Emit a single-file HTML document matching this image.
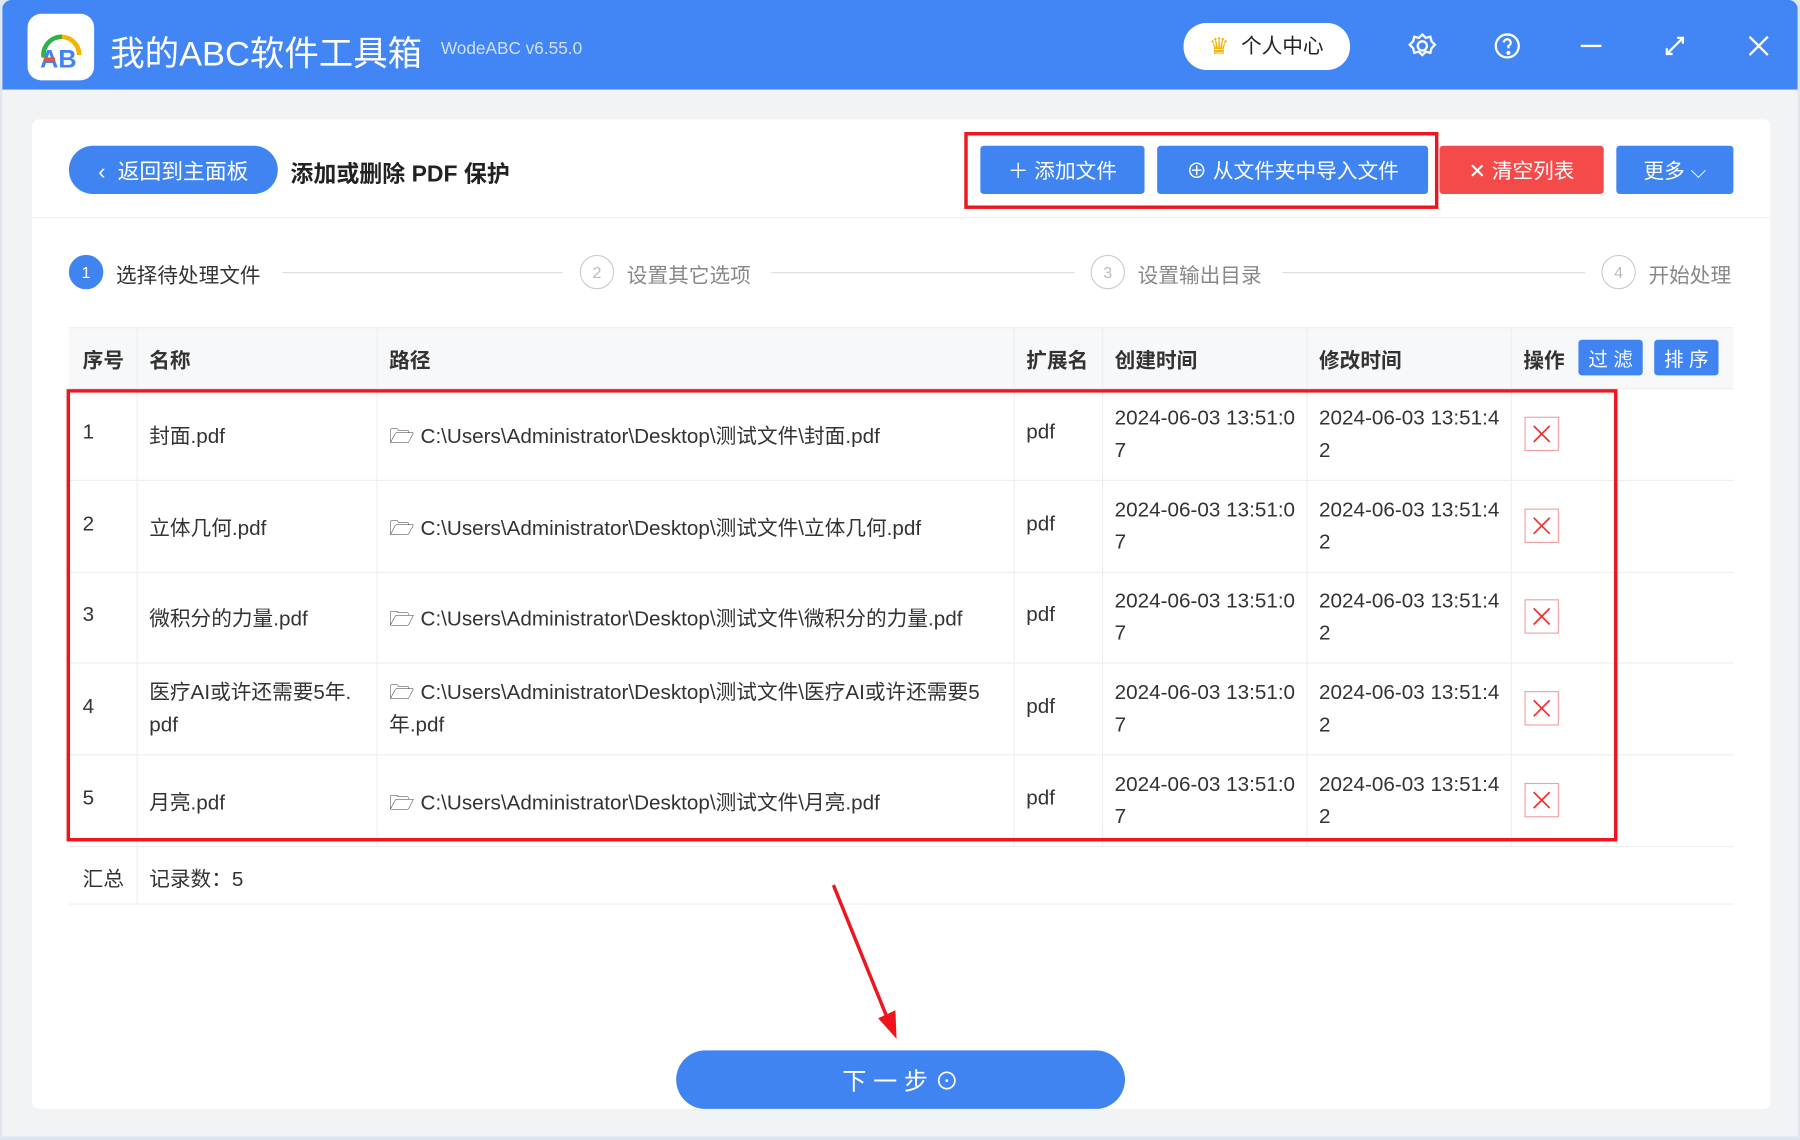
<!DOCTYPE html>
<html><head><meta charset="utf-8"><style>
*{margin:0;padding:0;box-sizing:border-box}
html,body{width:1800px;height:1140px;overflow:hidden;background:#dfe6ee}
#s{position:absolute;left:0;top:0;width:1568px;height:993px;transform:scale(1.14796);transform-origin:0 0;font-family:"Liberation Sans","Noto Sans CJK SC",sans-serif;color:#333}
.a{position:absolute}
.btn{position:absolute;color:#fff;font-size:18px;display:flex;align-items:center;justify-content:center;border-radius:3px;background:#3f84f1}
.c{position:absolute;font-size:18px;color:#333}
.st{position:absolute;top:222px;width:30px;height:30px;border-radius:50%;border:1px solid #ccc;color:#bbb;font-size:14px;text-align:center;line-height:28px}
.stl{position:absolute;top:226px;font-size:18px;color:#888}
.ln{position:absolute;top:237px;height:1px;background:#ddd}
.x{position:absolute;left:1328px;width:30px;height:30px;border:1px solid #f3a0a0}
</style></head><body><div id="s">
<div class="a" style="left:2px;top:0;width:1564px;height:990px;background:#f2f3f5;border-radius:8px 8px 0 0;overflow:hidden">
<div class="a" style="left:0;top:0;width:1564px;height:78px;background:#4285f4"></div>
</div>
<div class="a" style="left:24px;top:12px;width:58px;height:58px;background:#fff;border-radius:12px"></div>
<svg class="a" style="left:24px;top:12px" width="58" height="58"><path d="M14 38 A16 16 0 0 1 30 20" stroke="#2db24a" stroke-width="4" fill="none"/><path d="M30 20 A16 16 0 0 1 45 36" stroke="#f5b400" stroke-width="4" fill="none"/><text x="11" y="47" font-size="22" font-weight="bold" fill="#3f84f1" font-family="Liberation Sans">AB</text><rect x="14" y="38" width="10" height="3" fill="#e53"/></svg>
<div class="a" style="left:96px;top:22px;font-size:30px;color:#fff">我的ABC软件工具箱</div>
<div class="a" style="left:384px;top:34px;font-size:15px;color:#cfe0ff">WodeABC v6.55.0</div>
<div class="a" style="left:1031px;top:20px;width:145px;height:41px;background:#fff;border-radius:20px;font-size:18px;line-height:41px;padding-left:50px;color:#222">个人中心</div>
<div class="a" style="left:1053px;top:28px;font-size:20px;color:#f5b400">♛</div>
<svg class="a" style="left:1225px;top:26px" width="30" height="30" fill="none" stroke="#fff" stroke-width="2"><circle cx="14" cy="14" r="4"/><path d="M14 4l3 3 4-1 1 4 3 3-3 3-1 4-4-1-3 3-3-3-4 1-1-4-3-3 3-3 1-4 4 1z"/></svg>
<svg class="a" style="left:1299px;top:26px" width="30" height="30" fill="none" stroke="#fff" stroke-width="2"><circle cx="14" cy="14" r="10"/><path d="M11 11a3 3 0 1 1 4 3v2"/><circle cx="15" cy="20" r="0.8" fill="#fff"/></svg>
<div class="a" style="left:1377px;top:39px;width:18px;height:2px;background:#fff"></div>
<svg class="a" style="left:1449px;top:30px" width="20" height="20" stroke="#fff" stroke-width="2"><path d="M3 17L17 3M12 3h5v5M3 12v5h5" fill="none"/></svg>
<svg class="a" style="left:1522px;top:30px" width="20" height="20" stroke="#fff" stroke-width="2"><path d="M2 2L18 18M18 2L2 18"/></svg>

<div class="a" style="left:28px;top:104px;width:1514px;height:862px;background:#fff;border-radius:6px"></div>
<div class="a" style="left:28px;top:189px;width:1514px;height:1px;background:#eee"></div>
<div class="btn" style="left:60px;top:127px;width:182px;height:42px;border-radius:21px;font-size:19px">‹&nbsp;&nbsp;返回到主面板</div>
<div class="a" style="left:253px;top:135px;font-size:20px;font-weight:bold;color:#222">添加或删除 PDF 保护</div>
<div class="btn" style="left:854px;top:127px;width:143px;height:42px">＋ 添加文件</div>
<div class="btn" style="left:1008px;top:127px;width:236px;height:42px">⊕ 从文件夹中导入文件</div>
<div class="a" style="left:840px;top:115px;width:413px;height:67px;border:3px solid #f0141e"></div>
<div class="btn" style="left:1254px;top:127px;width:143px;height:42px;background:#f54a4a">✕ 清空列表</div>
<div class="btn" style="left:1408px;top:127px;width:102px;height:42px">更多 ⌵</div>

<div class="st" style="left:60px;background:#3f84f1;border-color:#3f84f1;color:#fff">1</div><div class="stl" style="left:101px;color:#333">选择待处理文件</div>
<div class="ln" style="left:246px;width:244px"></div>
<div class="st" style="left:505px">2</div><div class="stl" style="left:546px">设置其它选项</div>
<div class="ln" style="left:672px;width:264px"></div>
<div class="st" style="left:950px">3</div><div class="stl" style="left:991px">设置输出目录</div>
<div class="ln" style="left:1117px;width:264px"></div>
<div class="st" style="left:1395px">4</div><div class="stl" style="left:1436px">开始处理</div>

<div class="a" style="left:60px;top:285px;width:1450px;height:53px;background:#f7f8fa;border-top:1px solid #eee"></div>
<div class="a" style="left:60px;top:285px;width:1450px;height:503px;border-bottom:1px solid #eee"></div>
<div class="a" style="left:60px;top:737px;width:1450px;height:1px;background:#eee"></div>
<div class="a" style="left:119px;top:285px;width:1px;height:452px;background:#eee"></div>
<div class="a" style="left:119px;top:737px;width:1px;height:51px;background:#eee"></div>
<div class="a" style="left:328px;top:285px;width:1px;height:452px;background:#eee"></div>
<div class="a" style="left:883px;top:285px;width:1px;height:452px;background:#eee"></div>
<div class="a" style="left:960px;top:285px;width:1px;height:452px;background:#eee"></div>
<div class="a" style="left:1138px;top:285px;width:1px;height:452px;background:#eee"></div>
<div class="a" style="left:1316px;top:285px;width:1px;height:452px;background:#eee"></div>
<div class="a" style="left:60px;top:338px;width:1450px;height:1px;background:#eee"></div>
<div class="a" style="left:60px;top:418px;width:1450px;height:1px;background:#eee"></div>
<div class="a" style="left:60px;top:498px;width:1450px;height:1px;background:#eee"></div>
<div class="a" style="left:60px;top:577px;width:1450px;height:1px;background:#eee"></div>
<div class="a" style="left:60px;top:657px;width:1450px;height:1px;background:#eee"></div>
<div class="c" style="left:72px;top:300px;font-weight:bold;font-size:18px">序号</div>
<div class="c" style="left:130px;top:300px;font-weight:bold;font-size:18px">名称</div>
<div class="c" style="left:339px;top:300px;font-weight:bold;font-size:18px">路径</div>
<div class="c" style="left:894px;top:300px;font-weight:bold;font-size:18px">扩展名</div>
<div class="c" style="left:971px;top:300px;font-weight:bold;font-size:18px">创建时间</div>
<div class="c" style="left:1149px;top:300px;font-weight:bold;font-size:18px">修改时间</div>
<div class="c" style="left:1327px;top:300px;font-weight:bold;font-size:18px">操作</div>
<div class="btn" style="left:1375px;top:296px;width:56px;height:31px;font-size:17px">过 滤</div>
<div class="btn" style="left:1441px;top:296px;width:56px;height:31px;font-size:17px">排 序</div>

<div class="c" style="left:72px;top:366px">1</div><div class="c" style="left:130px;top:366px">封面.pdf</div><div class="c" style="left:339px;top:366px">🗁 C:\Users\Administrator\Desktop\测试文件\封面.pdf</div><div class="c" style="left:894px;top:366px">pdf</div><div class="c" style="left:971px;top:350px;line-height:28px">2024-06-03 13:51:0<br>7</div><div class="c" style="left:1149px;top:350px;line-height:28px">2024-06-03 13:51:4<br>2</div>
<div class="c" style="left:72px;top:446px">2</div><div class="c" style="left:130px;top:446px">立体几何.pdf</div><div class="c" style="left:339px;top:446px">🗁 C:\Users\Administrator\Desktop\测试文件\立体几何.pdf</div><div class="c" style="left:894px;top:446px">pdf</div><div class="c" style="left:971px;top:430px;line-height:28px">2024-06-03 13:51:0<br>7</div><div class="c" style="left:1149px;top:430px;line-height:28px">2024-06-03 13:51:4<br>2</div>
<div class="c" style="left:72px;top:525px">3</div><div class="c" style="left:130px;top:525px">微积分的力量.pdf</div><div class="c" style="left:339px;top:525px">🗁 C:\Users\Administrator\Desktop\测试文件\微积分的力量.pdf</div><div class="c" style="left:894px;top:525px">pdf</div><div class="c" style="left:971px;top:509px;line-height:28px">2024-06-03 13:51:0<br>7</div><div class="c" style="left:1149px;top:509px;line-height:28px">2024-06-03 13:51:4<br>2</div>
<div class="c" style="left:72px;top:605px">4</div><div class="c" style="left:130px;top:589px;line-height:28px">医疗AI或许还需要5年.<br>pdf</div><div class="c" style="left:339px;top:589px;line-height:28px">🗁 C:\Users\Administrator\Desktop\测试文件\医疗AI或许还需要5<br>年.pdf</div><div class="c" style="left:894px;top:605px">pdf</div><div class="c" style="left:971px;top:589px;line-height:28px">2024-06-03 13:51:0<br>7</div><div class="c" style="left:1149px;top:589px;line-height:28px">2024-06-03 13:51:4<br>2</div>
<div class="c" style="left:72px;top:685px">5</div><div class="c" style="left:130px;top:685px">月亮.pdf</div><div class="c" style="left:339px;top:685px">🗁 C:\Users\Administrator\Desktop\测试文件\月亮.pdf</div><div class="c" style="left:894px;top:685px">pdf</div><div class="c" style="left:971px;top:669px;line-height:28px">2024-06-03 13:51:0<br>7</div><div class="c" style="left:1149px;top:669px;line-height:28px">2024-06-03 13:51:4<br>2</div>
<div class="x" style="top:363px"></div><div class="x" style="top:443px"></div><div class="x" style="top:522px"></div><div class="x" style="top:602px"></div><div class="x" style="top:682px"></div>
<svg class="a" style="left:1328px;top:363px" width="30" height="350" stroke="#e33" stroke-width="1.5"><path d="M8 8l14 14M22 8L8 22M8 88l14 14M22 88L8 102M8 167l14 14M22 167L8 181M8 247l14 14M22 247L8 261M8 327l14 14M22 327L8 341"/></svg>
<div class="a" style="left:58px;top:339px;width:1351px;height:394px;border:3px solid #f0141e"></div>
<div class="c" style="left:72px;top:752px">汇总</div><div class="c" style="left:130px;top:752px">记录数：5</div>
<svg class="a" style="left:715px;top:765px" width="80" height="145"><path d="M11 6L58 122" stroke="#f0141e" stroke-width="3"/><path d="M50 122l16 18-1-25z" fill="#f0141e"/></svg>
<div class="btn" style="left:589px;top:915px;width:391px;height:51px;border-radius:26px;font-size:21px">下 一 步 ⊙</div>
</div></body></html>
